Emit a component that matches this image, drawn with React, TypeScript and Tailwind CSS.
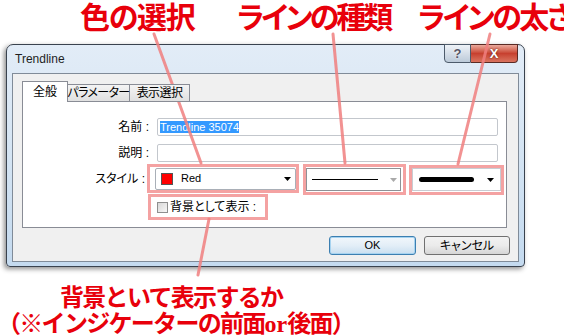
import React from 'react';

const Arrow: React.FC<{ gray?: boolean }> = ({ gray }) => (
  <svg width="7" height="4" viewBox="0 0 7 4" className="shrink-0">
    <path d="M0 0h7L3.5 4z" fill={gray ? '#a9a9a9' : '#000'} />
  </svg>
);

const Tab: React.FC<{ label: string; active?: boolean; w: string }> = ({ label, active, w }) =>
  active ? (
    <div className={`${w} h-[21px] border border-b-0 border-[#898c95] bg-white flex items-center justify-center text-[12px] text-black whitespace-nowrap`}>
      {label}
    </div>
  ) : (
    <div className={`${w} h-[18px] border border-l-0 border-[#898c95] bg-gradient-to-b from-[#f4f4f4] to-[#e0e0e0] flex items-center justify-center text-[12px] text-black whitespace-nowrap tracking-[-0.6px]`}>
      {label}
    </div>
  );

const App: React.FC = () => {
  return (
    <div className="relative w-[564px] h-[336px] bg-white overflow-hidden">
      {/* top notes */}
      <div className="flex h-[44px] font-['Noto_Sans_CJK_JP',sans-serif] font-bold text-[30px] leading-[30px] text-[#e8000b] whitespace-nowrap [font-feature-settings:'palt']">
        <span className="ml-[80px] w-[157px] shrink-0 tracking-[-1.3px]">色の選択</span>
        <span className="w-[181px] shrink-0 tracking-[-3px]">ラインの種類</span>
        <span className="shrink-0 tracking-[-2.5px]">ラインの太さ</span>
      </div>

      {/* dialog */}
      <div className="ml-[6px] w-[519px] h-[223px] rounded-t-[7px] rounded-b-[4px] border border-[#39424e] bg-gradient-to-b from-[#e2ecf7] via-[#d4e4f3] to-[#c4daef] px-[5px] pb-[4px] flex flex-col shadow-[-2px_2px_5px_rgba(0,0,0,0.45)] font-['Liberation_Sans','Noto_Sans_CJK_JP',sans-serif] [font-feature-settings:'palt']">
        <div className="h-[28px] flex justify-between items-start">
          <span className="self-center ml-[3px] text-[12px] text-[#1e1e1e]">Trendline</span>
          <div className="flex -mt-px mr-[1px]">
            <div className="w-[27px] h-[19px] rounded-bl-[4px] border border-[#4d5b6b] bg-gradient-to-b from-[#eef2f7] via-[#d5dee8] to-[#bccad9] flex items-center justify-center text-[13px] font-bold text-[#556] [text-shadow:0_0_2px_#fff]">
              ?
            </div>
            <div className="w-[47px] h-[19px] rounded-br-[4px] border border-l-0 border-[#5a2a24] bg-gradient-to-b from-[#e9a99c] via-[#c7402f] to-[#d9735f] flex items-center justify-center text-[13px] font-bold text-white [text-shadow:0_0_2px_#4a1510]">
              X
            </div>
          </div>
        </div>

        <div className="h-[189px] border border-[#808b98] bg-[#f0f0f0] pt-[7px] pl-[9px] flex flex-col">
          <div className="relative z-10 flex items-end h-[21px] -mb-px">
            <Tab label="全般" active w="w-[46px]" />
            <Tab label="パラメーター" w="w-[62px]" />
            <Tab label="表示選択" w="w-[60px]" />
          </div>
          <div className="w-[485px] h-[127px] border border-[#898c95] bg-white pt-[16px] text-[12px] text-black">
            <div className="flex items-center h-[18px]">
              <span className="w-[126px] text-right">名前 :</span>
              <div className="ml-[8px] w-[341px] h-[18px] border border-[#c3c7cd] rounded-[2px] flex items-center pl-[2px]">
                <span className="bg-[#3399ff] text-white text-[11px] leading-[12px]">Trendline 35074</span>
              </div>
            </div>
            <div className="flex items-center h-[18px] mt-[8px]">
              <span className="w-[126px] text-right">説明 :</span>
              <div className="ml-[8px] w-[341px] h-[18px] border border-[#c3c7cd] rounded-[2px]" />
            </div>
            <div className="flex items-start mt-[2px]">
              <span className="w-[124px] h-[29px] flex items-center justify-end pr-[2px]">スタイル :</span>
              <div className="w-[152px] h-[29px] border-[3px] border-[#f4a2a2] pl-[5px] flex items-center">
                <div className="w-[141px] h-[22px] border border-[#a9afb7] rounded-[2px] bg-white flex items-center pl-[5px] pr-[4px]">
                  <span className="w-[12px] h-[12px] border border-[#555] bg-[#ff0000] shrink-0" />
                  <span className="ml-[8px] text-[11px] flex-1">Red</span>
                  <Arrow />
                </div>
              </div>
              <div className="ml-[4px] w-[103px] h-[31px] border-[3px] border-[#f4a2a2] pt-[1px]">
                <div className="w-[95px] h-[23px] border border-[#8e9196] bg-white flex items-center pl-[5px] pr-[3px]">
                  <span className="w-[66px] h-px bg-black" />
                  <span className="flex-1" />
                  <Arrow gray />
                </div>
              </div>
              <div className="ml-[3px] mt-[1px] w-[95px] h-[30px] border-[3px] border-[#f4a2a2]">
                <div className="w-[89px] h-[23px] border border-[#c8ccd2] bg-white flex items-center pl-[6px] pr-[6px]">
                  <span className="w-[55px] h-[5px] rounded-full bg-black" />
                  <span className="flex-1" />
                  <Arrow />
                </div>
              </div>
            </div>
            <div className="-mt-px ml-[125px] w-[120px] h-[26px] border-[3px] border-[#f4a2a2] pl-[6px] pt-[1px] flex items-start">
              <div className="flex items-center gap-[2px]">
                <span className="w-[11px] h-[11px] border border-[#8e8f8f] bg-gradient-to-br from-[#d8d8d8] to-[#f7f7f7]" />
                <span>背景として表示 :</span>
              </div>
            </div>
          </div>
          <div className="flex justify-end gap-[8px] mt-[8px] mr-[8px]">
            <div className="w-[87px] h-[19px] rounded-[3px] border border-[#3c7fb1] bg-gradient-to-b from-[#f2f7fb] via-[#e3eef7] to-[#c9dff0] shadow-[inset_0_0_0_1px_#a6d3f0] flex items-center justify-center text-[11px]">
              OK
            </div>
            <div className="w-[86px] h-[19px] rounded-[3px] border border-[#707070] bg-gradient-to-b from-[#f2f2f2] via-[#ebebeb] to-[#d6d6d6] flex items-center justify-center text-[12px]">
              キャンセル
            </div>
          </div>
        </div>
      </div>

      {/* bottom notes */}
      <div className="mt-[16px] font-['Noto_Sans_CJK_JP',sans-serif] font-bold text-[24px] leading-[26px] text-[#e8000b] whitespace-nowrap tracking-[-1.7px]">
        <p className="pl-[60px]">背景といて表示するか</p>
        <p className="-ml-[3px]">
          （※インジケーターの前面<span className="font-['Liberation_Serif',serif] tracking-normal">or</span>後面）
        </p>
      </div>

      {/* leader lines */}
      <svg className="absolute inset-0 pointer-events-none" width="564" height="336" viewBox="0 0 564 336">
        <g stroke="#f07f7f" strokeOpacity="0.85" strokeWidth="3" strokeLinecap="round">
          <line x1="154" y1="34" x2="201" y2="163" />
          <line x1="333" y1="34" x2="345" y2="163" />
          <line x1="490" y1="34" x2="458" y2="164" />
          <line x1="209" y1="219" x2="198" y2="275" />
        </g>
      </svg>
    </div>
  );
};

export default App;
